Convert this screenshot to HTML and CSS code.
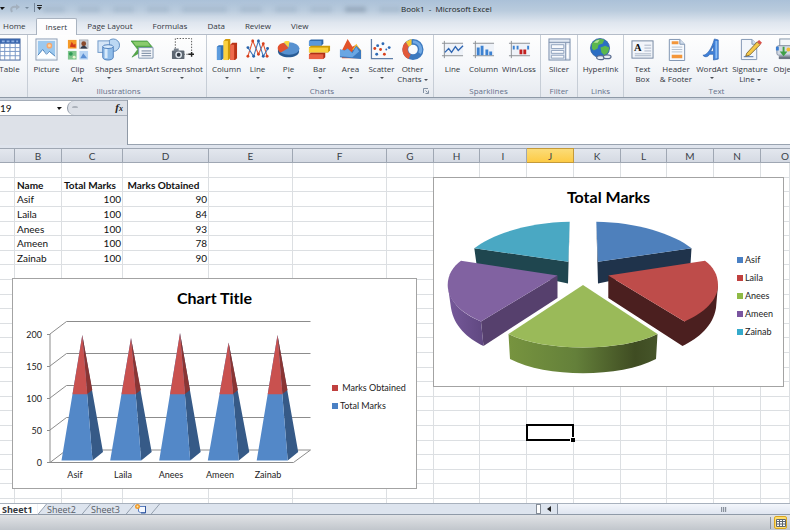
FILE: index.html
```html
<!DOCTYPE html>
<html lang="en">
<head>
<meta charset="utf-8">
<title>Book1 - Microsoft Excel</title>
<link rel="stylesheet" href="styles.css">
</head>
<body>
<div class="app">
  <header class="top">
    <div class="titlebar">
      <div class="quick">
        <i class="caret dark"></i>
        <svg width="10" height="9" viewBox="0 0 10 9"><path d="M2 8C0 4 2 2 7 3" fill="none" stroke="#a3b0be" stroke-width="2"/><path d="M6 0l4 3-4 3z" fill="#a3b0be"/></svg>
        <i class="caret pale"></i>
        <svg width="8" height="10" viewBox="0 0 8 10"><path d="M.5 0v9" stroke="#76879b"/><path d="M3 2.500h5" stroke="#222"/><path d="M3 4h5l-2.500 3z" fill="#222"/></svg>
      </div>
      <div class="ghosts" aria-hidden="true"><i></i><i></i><i></i><i></i><i></i><i></i><i></i><i></i><i></i><i></i></div>
      <h1>Book1&nbsp; - &nbsp;Microsoft Excel</h1>
    </div>
    <nav class="tabs">
      <button>Home</button><button class="active">Insert</button><button>Page Layout</button><button>Formulas</button><button>Data</button><button>Review</button><button>View</button>
    </nav>
  </header>

  <div class="ribbon">
    <section class="group g-tables">
      <div class="tools">
        <button class="tool"><svg viewBox="0 0 24 24"><rect x="2" y="1" width="21" height="22" fill="#fff" stroke="#44649c"/><path d="M2 1h21v5H2z" fill="#3a66ad"/><path d="M2 10h21M2 14h21M2 18.500h21M7 6v17M12.500 6v17M18 6v17" stroke="#7896c6"/><path d="M4 3.500h17" stroke="#8fb0e2" stroke-width="2" stroke-dasharray="3 2"/></svg><span>Table</span></button>
      </div>
    </section>
    <section class="group g-ill">
      <div class="tools">
        <button class="tool"><svg viewBox="0 0 24 24"><rect x="1" y="1" width="22" height="22" fill="#f2f6fb" stroke="#8b9db5"/><rect x="3" y="3" width="18" height="18" fill="#9cc8ee"/><circle cx="15" cy="8" r="3" fill="#f7a76b"/><circle cx="15" cy="8" r="1.500" fill="#fdd9a8"/><path d="M3 18l5-6 4 4 3-2 6 5v2H3z" fill="#fff"/><path d="M3 18l5-6 4 5 3-3 6 5" fill="none" stroke="#477fb9"/></svg><span>Picture</span></button>
        <button class="tool"><svg viewBox="0 0 24 24"><rect x="2" y="2" width="9" height="9" fill="#f59a28"/><path d="M4 9l2-5 2 3 2-1v4z" fill="#d13b1c"/><rect x="14" y="2" width="9" height="9" fill="#c9ccd2" stroke="#7b8492" stroke-width=".5"/><circle cx="18.500" cy="6" r="2.500" fill="#8a4a2c"/><path d="M15 11c1-4 6-4 7 0z" fill="#333b4b"/><rect x="2" y="13.500" width="9" height="9" fill="#7fc58c"/><circle cx="5" cy="16.500" r="2" fill="#2f9b55"/><circle cx="8.500" cy="20" r="1.500" fill="#e9f5d0"/><rect x="14" y="13.500" width="9" height="9" fill="#b9d5f4"/><path d="M15 21l3-5 4 5z" fill="#5b8fd4"/></svg><span>Clip<br>Art</span></button>
        <button class="tool"><svg viewBox="0 0 24 24"><circle cx="17" cy="7.500" r="6.500" fill="#bcd8f3" stroke="#5f8dc0"/><rect x="1" y="3" width="12" height="12" fill="#d4e5f7" stroke="#6f98c8"/><path d="M6 9v11c0 4 11 4 11 0V9" fill="#8fbce9" stroke="#4f80bb"/><path d="M8 11v10h3V11z" fill="#d8eafb"/><ellipse cx="11.500" cy="9" rx="5.500" ry="2" fill="#d8eafb" stroke="#4f80bb"/></svg><span>Shapes</span><i class="caret"></i></button>
        <button class="tool w37"><svg viewBox="0 0 24 24"><path d="M0 3h17l5 6-5 7H8l-7 4 6-8z" fill="#55a947" stroke="#3b8d3a" stroke-width=".6"/><path d="M2 4h15l3 4H5z" fill="#8acb6c"/><path d="M8 10h15v11H8z" fill="#f6f8fb" stroke="#7c92ae"/><path d="M11 13.500h10M11 16h10M11 18.500h10" stroke="#6c7f99"/></svg><span>SmartArt</span></button>
        <button class="tool w42"><svg viewBox="0 0 24 24"><path d="M4.500 11V.5h17V17H12" fill="none" stroke="#555" stroke-dasharray="1.500 1.500"/><rect x="1" y="13" width="13" height="9" rx="1" fill="#5d6772"/><rect x="3" y="11" width="5" height="3" fill="#737d88"/><circle cx="8" cy="17.500" r="3.500" fill="#dfe5ec"/><circle cx="8" cy="17.500" r="2" fill="#333b45"/><path d="M18 17h6M21.500 14.500v5" stroke="#222" stroke-width="1.500"/></svg><span>Screenshot</span><i class="caret"></i></button>
      </div>
      <h2>Illustrations</h2>
    </section>
    <section class="group g-charts">
      <div class="tools">
        <button class="tool"><svg viewBox="0 0 24 24"><path d="M2 9l2-1.500h5V21l-2 2H2z" fill="#2f6fb5"/><path d="M2 9h4v14H2z" fill="#5c9cde"/><path d="M9 3l2-2h5v20l-2 2H9z" fill="#d19a08"/><path d="M9 3h4.500v20H9z" fill="#fbd13f"/><path d="M16 7l2-2h5v16l-2 2h-5z" fill="#b93318"/><path d="M16 7h4v16h-4z" fill="#ee6a4c"/></svg><span>Column</span><i class="caret"></i></button>
        <button class="tool"><svg viewBox="0 0 24 24"><path d="M2 19L7 3l6 14 5-11 4 13" fill="none" stroke="#e0532f" stroke-width="1.100"/><path d="M2 10l6 9L13 3l5 16 5-8" fill="none" stroke="#3f78bb" stroke-width="1.100"/><g fill="#d8401c"><circle cx="2" cy="19" r="1.500"/><circle cx="7" cy="3" r="1.500"/><circle cx="13" cy="17" r="1.500"/><circle cx="18" cy="6" r="1.500"/><circle cx="22" cy="19" r="1.500"/></g><g fill="#2863ab"><circle cx="2" cy="10" r="1.500"/><circle cx="8" cy="19" r="1.500"/><circle cx="13" cy="3" r="1.500"/><circle cx="18" cy="19" r="1.500"/><circle cx="22.500" cy="11" r="1.500"/></g></svg><span>Line</span><i class="caret"></i></button>
        <button class="tool"><svg viewBox="0 0 24 24"><path d="M1 11v3c0 8 22 8 22 0v-3z" fill="#285b94"/><ellipse cx="12.500" cy="11" rx="11" ry="6.500" fill="#5791d0"/><path d="M12 10.500L7 5C2 6 0 9 1 12c1 2 2 3 3 3z" fill="#e2522f"/><path d="M12 10L7 4.500c1-1.500 4-1.500 6-1z" fill="#fbd63c"/></svg><span>Pie</span><i class="caret"></i></button>
        <button class="tool"><svg viewBox="0 0 24 24"><path d="M1 3l2-1.500h13V6l-2 2H1z" fill="#2c66a8"/><path d="M1 3h13v5H1z" fill="#5b98da"/><path d="M1 10l2-2h20v5l-2 2H1z" fill="#cd9b07"/><path d="M1 10h20v5H1z" fill="#f9d13b"/><path d="M1 17l2-1.500h15V20l-2 2H1z" fill="#b02e15"/><path d="M1 17h15v5H1z" fill="#ea6245"/></svg><span>Bar</span><i class="caret"></i></button>
        <button class="tool"><svg viewBox="0 0 24 24"><path d="M3 13L9 1l5 8 4-2 5 6v8H3z" fill="#e1532a"/><path d="M14 12l4-6 5 7v8z" fill="#f8be2c"/><path d="M1 12l5 1 3-2 4 4 5-7 5 5v9L1 20z" fill="#3b79bf"/><path d="M1 12l5 1 3-2 5 5 4-7 3 5-7 6-13-1z" fill="#6aa6e3"/></svg><span>Area</span><i class="caret"></i></button>
        <button class="tool"><svg viewBox="0 0 24 24"><path d="M1.500 1v20.500H24" fill="none" stroke="#5f7fa8" stroke-width="1.300"/><g fill="#d8401c"><circle cx="5" cy="11" r="1.500"/><circle cx="11" cy="12" r="1.500"/><circle cx="15" cy="17" r="1.500"/></g><g fill="#2d6ab5"><circle cx="8" cy="8" r="1.500"/><circle cx="7" cy="17" r="1.500"/><circle cx="13.500" cy="6" r="1.500"/><circle cx="20" cy="10" r="1.500"/><circle cx="17" cy="12" r="1"/></g></svg><span>Scatter</span><i class="caret"></i></button>
        <button class="tool"><svg viewBox="0 0 24 24"><circle cx="12.500" cy="12" r="8" fill="none" stroke="#3c79bf" stroke-width="6"/><path d="M12.500 4a8 8 0 0 1 7 12" fill="none" stroke="#71a9e4" stroke-width="3"/><path d="M9 19.500A8 8 0 0 1 6.500 6.500" fill="none" stroke="#e2593a" stroke-width="5.500"/><path d="M5 4l6-3v6l-3 2z" fill="#f8ca35"/></svg><span>Other<br>Charts <i class="caret"></i></span></button>
      </div>
      <h2>Charts</h2>
      <svg class="launcher" viewBox="0 0 6 6"><path d="M.5 5V.5H5" fill="none" stroke="#8391a3"/><path d="M2.500 2.500l2 2M5.500 2.500v3h-3" fill="none" stroke="#8391a3"/></svg>
    </section>
    <section class="group g-spark">
      <div class="tools">
        <button class="tool"><svg viewBox="0 0 24 24"><path d="M3 5h20v13H3z" fill="#eef2f8"/><path d="M1 5.500h22M1 18.500h22M3.500 3v18" stroke="#8c8f94"/><path d="M4 15l4-4 3 4 4-6 3 4 5-5" fill="none" stroke="#2f66b3" stroke-width="1.400"/></svg><span>Line</span></button>
        <button class="tool"><svg viewBox="0 0 24 24"><path d="M3 5h20v13H3z" fill="#eef2f8"/><path d="M1 5.500h22M1 18.500h22M3.500 3v18" stroke="#8c8f94"/><path d="M5 10h3v8H5zM9 8h3v10H9zM14 12h3v6h-3zM18 14h3v4h-3z" fill="#3c82d2"/></svg><span>Column</span></button>
        <button class="tool w40"><svg viewBox="0 0 24 24"><path d="M3 5h20v13H3z" fill="#eef2f8"/><path d="M1 5.500h22M1 18.500h22M3.500 3v18" stroke="#8c8f94"/><path d="M5 8h2v4H5zM9 8h2v4H9zM20 8h2v4h-2z" fill="#3c82d2"/><path d="M12 12h3v5h-3zM16 12h3v5h-3z" fill="#c21f1f"/></svg><span>Win/Loss</span></button>
      </div>
      <h2>Sparklines</h2>
    </section>
    <section class="group g-filter">
      <div class="tools">
        <button class="tool"><svg viewBox="0 0 24 24"><rect x="1" y="1" width="22" height="22" fill="#e2e9f3" stroke="#7a8eab"/><path d="M1 4.500h22M18.500 5v18" stroke="#7a8eab"/><path d="M3.500 7h13v4h-13zM3.500 13h13v3h-13zM3.500 18h13v3h-13z" fill="#f8fafd" stroke="#8fa2bd"/><path d="M20.500 7v14" stroke="#fff" stroke-width="2"/></svg><span>Slicer</span></button>
      </div>
      <h2>Filter</h2>
    </section>
    <section class="group g-links">
      <div class="tools">
        <button class="tool"><svg viewBox="0 0 24 24"><circle cx="11.500" cy="10.500" r="10" fill="#2b6ec4" stroke="#265593" stroke-width=".7"/><path d="M3 6c3-5 10-6 13-4l-2 4-4 1-1 4-4 2-2-2zM12 10l5-2 4 2c0 4-2 7-5 8l-3-3z" fill="#5bb84c"/><path d="M5 5c2-3 5-3 6-3l-2 3z" fill="#b8e39c"/><g fill="#e8edf5" stroke="#5a6c8f" stroke-width="1.300"><ellipse cx="12" cy="20.500" rx="4" ry="2"/><ellipse cx="19" cy="19.500" rx="4" ry="2"/></g></svg><span>Hyperlink</span></button>
      </div>
      <h2>Links</h2>
    </section>
    <section class="group g-text">
      <div class="tools">
        <button class="tool"><svg viewBox="0 0 24 24"><rect x="1" y="3" width="22" height="18" fill="#f2f5fa" stroke="#72859f"/><text x="3" y="14" class="glyph">A</text><path d="M14 7.500h7M14 10.500h7M14 13.500h7M4 16.500h17M4 18.500h17" stroke="#a8b4c5"/></svg><span>Text<br>Box</span></button>
        <button class="tool w36"><svg viewBox="0 0 24 24"><path d="M4.500 1.500h11l5 5v17h-16z" fill="#f6f9fd" stroke="#7c92b0"/><path d="M15.500 1.500v5h5" fill="#d3dfee" stroke="#7c92b0"/><path d="M7 3.500h7v3H7zM7 17.500h11v3.500H7z" fill="#f3963a"/><path d="M7 9.500h11M7 12h11M7 14.500h11" stroke="#b4bfce"/></svg><span>Header<br>&amp; Footer</span></button>
        <button class="tool w36"><svg viewBox="0 0 24 24"><path d="M2 18c4 0 9-6 12-17l4 1v20l-5 1v-6H9c-1 2-4 4-7 1zM10 14h3V8z" fill="#3f80d8" fill-rule="evenodd" stroke="#2b61b0" stroke-width=".7"/><path d="M15 3l2 0V21l-2 .5z" fill="#8bbcf4"/></svg><span>WordArt</span><i class="caret"></i></button>
        <button class="tool w40"><svg viewBox="0 0 24 24"><path d="M2.500 1.500h11l5 5v16h-16z" fill="#f2f6fb" stroke="#7f95b4"/><path d="M13.500 1.500v5h5" fill="#d3dfee" stroke="#7f95b4"/><path d="M5 19.500h10" stroke="#4a6fa8"/><path d="M8 16L19 4l3 3-11 11-4 1z" fill="#f4c84a" stroke="#6b5522" stroke-width=".8"/><path d="M19 4l2-2 3 3-2 2z" fill="#d9534c"/></svg><span>Signature<br>Line <i class="caret"></i></span></button>
        <button class="tool"><svg viewBox="0 0 24 24"><rect x="6" y="1" width="15" height="9" fill="#f3f6fa" stroke="#8494a8"/><rect x="3" y="8" width="21" height="10" rx="2" fill="#d3dae4" stroke="#7f8da1"/><path d="M2 9h3v4H2z" fill="#3b7dd0"/><path d="M9 9v5H6l4 5 4-5h-3V9z" fill="#3fa047"/><circle cx="15" cy="12" r="2" fill="#f1bd35"/><path d="M5 19h18v3H5z" fill="#6b7583"/></svg><span>Object</span></button>
      </div>
      <h2>Text</h2>
    </section>
  </div>

  <div class="formula">
    <div class="namebox">
      <div class="namerow">
        <input aria-label="Name box" value="19">
        <i class="caret dark"></i>
        <div class="fx"><i></i><button aria-label="Insert function">f<small>x</small></button></div>
      </div>
    </div>
    <textarea aria-label="Formula bar"></textarea>
  </div>

  <main class="sheet">
    <table>
      <colgroup><col class="c15"><col class="c47"><col class="c61"><col class="c86"><col class="c84"><col class="c94"><col class="c47"><col class="c46"><col class="c47"><col class="c47"><col class="c47"><col class="c46"><col class="c47"><col class="c47"><col></colgroup>
      <thead><tr><th></th><th>B</th><th>C</th><th>D</th><th>E</th><th>F</th><th>G</th><th>H</th><th>I</th><th class="on">J</th><th>K</th><th>L</th><th>M</th><th>N</th><th class="last">O</th></tr></thead>
      <tbody id="cells"></tbody>
    </table>

    <figure class="chart cone">
      <figcaption>Chart Title</figcaption>
      <div class="plot">
        <svg width="318" height="170" viewBox="13 317 318 170">
          <g fill="none" stroke="#8c8c8c">
            <path d="M50 335v128.500h243.500l17-12.500H66.500L50 463.500M50 335l16.500-12.500h244M50 367l16.500-12.500h244M50 399l16.500-12.500h244M50 431l16.500-12.500h244"/>
            <path d="M47 335.500h3M47 367.500h3M47 399.500h3M47 431.500h3M47 463.500h3"/>
          </g>
          <g fill="#365a87"><path d="M82.300 336l20.700 117-10.500 8.500zM131 339l20.700 114-10.500 8.500zM180 334l20.700 119-10.500 8.500zM228.600 343.500l20.700 109.500-10.500 8.500zM277.500 336l20.700 117-10.500 8.500z"/></g>
          <g fill="#5388c8"><path d="M82.300 336l10.200 125.500h-31zM131 339l10.200 122.500h-31zM180 334l10.200 127.500h-31zM228.600 343.500l10.200 118h-31zM277.500 336l10.200 125.500h-31z"/></g>
          <g fill="#8a3534"><path d="M82.300 336L92.300 391 87.200 395zM131 339l9.800 52-5 4zM180 334l10 57-5 4zM228.600 343.500l9.300 47.500-4.800 4zM277.500 336l10 55-5 4z"/></g>
          <g fill="#c9514f"><path d="M82.300 336l5 59.300H72.500zM131 339l4.900 56.300h-14.400zM180 334l5.100 61.300h-15zM228.600 343.500l4.600 51.800h-13.700zM277.500 336l5 59.300h-14.800z"/></g>
          <g class="axis end"><text x="42" y="339">200</text><text x="42" y="371">150</text><text x="42" y="403">100</text><text x="42" y="435">50</text><text x="42" y="467">0</text></g>
          <g class="axis mid"><text x="75" y="479">Asif</text><text x="123" y="479">Laila</text><text x="171" y="479">Anees</text><text x="220" y="479">Ameen</text><text x="268" y="479">Zainab</text></g>
        </svg>
        <ul class="legend">
          <li class="k-red">&nbsp;Marks Obtained</li><li class="k-blue">Total Marks</li>
        </ul>
      </div>
    </figure>

    <figure class="chart pie">
      <figcaption>Total Marks</figcaption>
      <div class="plot">
        <svg width="302" height="170" viewBox="434 215 302 170">
          <defs>
            <linearGradient id="gw"><stop offset="0" stop-color="#77943f"/><stop offset=".45" stop-color="#64803a"/><stop offset=".85" stop-color="#3f4c22"/><stop offset="1" stop-color="#46552a"/></linearGradient>
            <linearGradient id="pw"><stop offset="0" stop-color="#76599a"/><stop offset="1" stop-color="#604881"/></linearGradient>
          </defs>
          <path d="M474.300 248.300L568.300 261.700 569.700 222 568 283.500 476.500 264z" fill="#1f464f"/>
          <path d="M474.300 248.300C492 234 530 222 569.700 221.700L568.300 261.700z" fill="#4aa8c3"/>
          <path d="M691.500 248.300L598 261.700 596.300 222 598 283.500 690.500 264z" fill="#1f334b"/>
          <path d="M691.500 248.300C674 234 636 222 596.300 221.700L598 261.700z" fill="#4e80bc"/>
          <path d="M557.500 275.500V298L483.500 346 481 321.500z" fill="#56406d"/>
          <path d="M447.700 285C449 300 460 313 481 321.500L483.500 346C467 338 454 326 451 308z" fill="url(#pw)"/>
          <path d="M461 260.700L557.500 275.500 481 321.500C461 313 447.700 300 447.700 285C447.700 275 453 266 461 260.700z" fill="#8162a1"/>
          <path d="M608.300 275.500V298L682.500 346C699 338 713 326 716 308L718 285 684.500 321.500z" fill="#4b1f1f"/>
          <path d="M705 260.700L608.300 275.500 684.500 321.500C704 313 718 300 718 285C718 275 713 266 705 260.700z" fill="#be4c4a"/>
          <path d="M508.500 334C545 352 621 352 657.500 334L656 359C620 378 546 378 510 359z" fill="url(#gw)"/>
          <path d="M583 285L508.500 334C545 352 621 352 657.500 334z" fill="#9aba59"/>
        </svg>
        <ul class="legend">
          <li class="k-blue">Asif</li><li class="k-red">Laila</li><li class="k-green">Anees</li><li class="k-purple">Ameen</li><li class="k-teal">Zainab</li>
        </ul>
      </div>
    </figure>
  </main>

  <footer>
    <div class="sheets">
      <button class="current">Sheet1</button>
      <svg class="slant" viewBox="0 0 10 12"><path d="M0 0h10L0 12z" fill="#fff"/><path d="M0 12L10 0" stroke="#8e99a8"/></svg>
      <button>Sheet2</button>
      <svg class="slant" viewBox="0 0 10 12"><path d="M0 12L10 0" stroke="#8e99a8"/></svg>
      <button>Sheet3</button>
      <svg class="slant" viewBox="0 0 10 12"><path d="M0 12L10 0" stroke="#8e99a8"/></svg>
      <button class="new" aria-label="Insert worksheet"><svg width="12" height="10" viewBox="0 0 12 10"><path d="M3.500 2.500h7v6h-5l-2-1z" fill="#f4f8ff" stroke="#5b7fc0"/><path d="M10.500 2v7H6" fill="none" stroke="#33589f"/><circle cx="2.500" cy="2.500" r="2.500" fill="#ee9a2e"/><circle cx="2.500" cy="2.500" r="1" fill="#ffe7a0"/></svg></button>
      <svg class="slant" viewBox="0 0 10 12"><path d="M0 12L10 0" stroke="#8e99a8"/></svg>
      <div class="scroll">
        <i class="split"></i><i class="left"></i>
        <div class="thumb"><i></i></div>
      </div>
    </div>
    <div class="status">
      <i class="sep"></i>
      <button aria-label="Normal view"><svg width="10" height="8" viewBox="0 0 10 8"><path d="M.5.500h9v7h-9zM.5 2.500h9M.5 5h9M3.500.5v7M6.500.5v7" fill="#fff" stroke="#5e6670"/></svg></button>
      <i class="edge"></i>
    </div>
  </footer>
</div>
<script src="sheet.js"></script>
</body>
</html>
```
FILE: sheet.js
```js
// Cell contents for columns B, C and D, keyed by row index.
const data = {
  1: ["Name", "Total Marks", "\u00a0Marks Obtained"],
  2: ["Asif", 100, 90],
  3: ["Laila", 100, 84],
  4: ["Anees", 100, 93],
  5: ["Ameen", 100, 78],
  6: ["Zainab", 100, 90]
};
const body = document.getElementById("cells");
for (let r = 0; r < 40; r++) {
  const tr = body.insertRow();
  for (let c = 0; c < 15; c++) {
    const td = tr.insertCell();
    if (data[r] && c > 0 && c < 4) {
      td.textContent = data[r][c - 1];
      if (r === 1) td.className = "head";
      else if (c > 1) td.className = "num";
    }
    if (r === 18 && c === 9) td.className = "selected";
  }
}
```
FILE: styles.css
```css
* { box-sizing: border-box; }
body { margin: 0; font: 8px/10px "Open Sans", "Noto Sans", sans-serif; color: #33373e; overflow: hidden; }
button { font: inherit; color: inherit; border: 0; background: none; padding: 0; }
h1, h2, figure, ul { margin: 0; padding: 0; font-weight: normal; font-size: inherit; }
.app { display: flex; flex-direction: column; height: 100vh; }

/* Title bar and tabs */
.top { background: linear-gradient(#abc1d8, #b9cbdd 30%, #dfe6ef 65%, #f1f4f8); }
.titlebar { height: 18px; display: flex; align-items: flex-start; }
.quick { display: flex; align-items: center; gap: 5px; height: 16px; width: 43px; }
.ghosts { display: flex; gap: 13px; width: 358px; padding-top: 7px; filter: blur(2px); }
.ghosts i { flex: 1 1 20px; height: 5px; background: #8fa4bb; opacity: .4; }
.ghosts i:nth-child(5) { flex-grow: 3; flex-basis: 40px; }
.ghosts i:nth-child(9) { background: #5f7389; }
h1 { color: #1a1d22; line-height: 17px; }
.caret { display: inline-block; border: 2px solid transparent; border-top-color: #4a4e55; border-bottom: 0; vertical-align: middle; }
.caret.dark { border-top-color: #111; border-width: 3px 3px 0 2px; }
.caret.pale { border-top-color: #75879a; }
.tabs { display: flex; height: 17px; border-bottom: 1px solid #b4bcc8; }
.tabs button { padding: 0 10px; line-height: 16px; white-space: nowrap; }
.tabs button:first-child { padding-left: 3px; }
.tabs .active { height: 17px; padding: 0 9px; background: #fdfdfe; border: 1px solid #a9b3c0; border-bottom: 0; border-radius: 2px 2px 0 0; }

/* Ribbon */
.ribbon { display: flex; height: 63px; overflow: hidden; background: linear-gradient(#fefefe, #f5f7fa 50%, #e6eaf0); border-bottom: 1px solid #8e99a7; }
.group { position: relative; flex: none; display: flex; flex-direction: column; justify-content: space-between; border-right: 1px solid #c6cdd6; }
.group h2 { text-align: center; color: #66718a; line-height: 12px; }
.tools { display: flex; padding-top: 3px; }
.g-tables { width: 28px; align-items: flex-start; overflow: hidden; }
.g-tables .tools { margin-left: -6px; }
.g-ill { width: 179px; padding-left: 3px; }
.g-charts { width: 227px; padding-left: 4px; }
.g-spark { width: 107px; padding-left: 3px; }
.g-filter { width: 37px; align-items: center; }
.g-links { width: 46px; align-items: center; }
.g-text { width: 183px; padding-left: 3px; }
.tool { flex: none; width: 31px; display: flex; flex-direction: column; align-items: center; line-height: 10px; text-align: center; white-space: nowrap; }
.tool svg { width: 23px; height: 23px; margin-bottom: 3px; flex: none; }
.tool > .caret { margin-top: 3px; }
.w36 { width: 36px; }
.w37 { width: 37px; }
.w40 { width: 40px; }
.w42 { width: 42px; }
.glyph { font: bold 11px "Liberation Serif", serif; fill: #111; }
.launcher { position: absolute; right: 4px; bottom: 3px; width: 6px; height: 6px; }

/* Formula bar */
.formula { display: flex; height: 50px; padding-top: 2px; background: #cfd6e0; border-bottom: 3px solid #dfe4ed; }
.namebox { width: 128px; background: #dde1e8; border-right: 1px solid #8f99a6; }
.namerow { display: flex; align-items: center; height: 16px; background: #fff; border-bottom: 1px solid #a5adb8; border-top: 1px solid #a5adb8; }
.namerow input { width: 57px; border: 0; padding: 0; background: none; font: 10px/14px Lato, sans-serif; color: #111; }
.fx { flex: 1; display: flex; align-items: center; justify-content: space-between; height: 14px; margin-left: 5px; padding: 0 4px; background: #dde1e8; border-left: 1px solid #8f99a6; border-radius: 7px 0 0 7px; }
.fx i { width: 6px; height: 4px; border-top: 2px solid #adb3bc; border-radius: 3px; }
.fx button { font: italic bold 11px/12px "Liberation Serif", serif; color: #222; }
.fx small { font-size: 8px; }
.formula textarea { flex: 1; border: 0; border-bottom: 1px solid #99a3b0; resize: none; outline: 0; background: #fff; }

/* Worksheet */
.sheet { flex: 1; position: relative; overflow: hidden; background: #fff; min-height: 0; }
table { width: 100%; border-collapse: separate; border-spacing: 0; table-layout: fixed; font: 10px/12px Lato, "Open Sans", sans-serif; color: #111; }
.c15 { width: 15px; } .c46 { width: 46px; } .c47 { width: 47px; } .c61 { width: 61px; }
.c84 { width: 84px; } .c86 { width: 86px; } .c94 { width: 94px; }
th { height: 15px; padding: 0; font-weight: normal; color: #3a3f48; background: linear-gradient(#e3e7ee, #d5dae3); border: 1px solid #9fa7b3; border-left: 0; }
th.last { text-align: right; padding-right: 1px; border-right: 0; }
th.on { background: linear-gradient(#fbdc78, #fdcb45); border-color: #c49a3a; }
td { height: 15px; padding: 0 2px; white-space: nowrap; border-right: 1px solid #dcdfe2; border-bottom: 1px solid #dcdfe2; }
tr:nth-child(5n+2) td, tr:nth-child(5n) td { height: 14px; }
td.head { font-weight: bold; }
td.num { text-align: right; padding-right: 1px; }
td.selected { position: relative; }
td.selected::before { content: ""; position: absolute; inset: -2px -1px -1px -1px; border: 2px solid #000; }
td.selected::after { content: ""; position: absolute; right: -2px; bottom: -2px; width: 4px; height: 4px; background: #000; border: 1px solid #fff; border-width: 1px 0 0 1px; }

/* Floating charts */
.chart { position: absolute; background: #fff; border: 1px solid #a3a3a3; color: #1c1c1c; }
.cone { left: 12px; top: 130px; width: 405px; height: 211px; }
.pie { left: 433px; top: 29px; width: 351px; height: 210px; }
figcaption { text-align: center; font: bold 16px/37px Lato, sans-serif; color: #000; }
.plot { display: flex; }
.plot svg { flex: none; }
.axis { font: 9px Lato, sans-serif; fill: #222; }
.end { text-anchor: end; }
.mid { text-anchor: middle; }
.legend { align-self: center; list-style: none; font: 9px/18px Lato, sans-serif; padding: 0 0 8px 1px; white-space: nowrap; }
.legend li { display: flex; align-items: center; gap: 2px; }
.legend li::before { content: ""; width: 6px; height: 6px; background: #4a80c4; }
.legend .k-red::before { background: #c0403f; }
.legend .k-green::before { background: #8fba45; }
.legend .k-purple::before { background: #7a55a0; }
.legend .k-teal::before { background: #35aacb; }

/* Sheet tabs, scroll bar and status bar */
.sheets { display: flex; height: 12px; background: #dde4ee; border-top: 1px solid #a8b1bd; border-bottom: 1px solid #8f9aa8; font: 9px/11px "Open Sans", sans-serif; color: #555b64; }
.sheets button { width: 34px; flex: none; text-align: left; }
.sheets .current { width: 37px; padding-left: 2px; background: #fff; font-weight: bold; color: #33373d; }
.sheets .new { width: 15px; display: flex; }
.slant { width: 10px; height: 11px; flex: none; }
.scroll { flex: 1; display: flex; justify-content: flex-end; align-items: center; gap: 6px; }
.split { width: 5px; height: 10px; border: 1px solid #858d98; background: #fff; }
.left { border: 3px solid transparent; border-right: 4px solid #222; border-left: 0; }
.thumb { width: 37%; height: 10px; display: flex; justify-content: center; align-items: center; padding-left: 100px; background: linear-gradient(#f3f6fb, #dfe5f0); border-left: 1px solid #8590a0; }
.thumb i { width: 6px; height: 5px; background: repeating-linear-gradient(90deg, #8a929e 0 1px, #d5dae2 1px 2px); }
.status { display: flex; justify-content: flex-end; align-items: center; gap: 3px; height: 15px; background: linear-gradient(#e1e3e6, #c1c6cc); }
.status button { width: 13px; height: 13px; display: grid; place-items: center; background: #ffdf6d; border: 1px solid #d9a520; border-radius: 2px; }
.sep { width: 1px; height: 12px; background: #8d949d; }
.edge { width: 0; height: 12px; }
```
